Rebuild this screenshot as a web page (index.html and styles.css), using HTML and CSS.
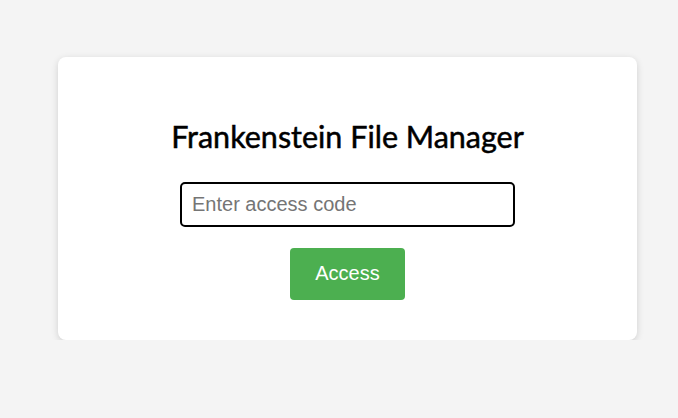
FILE: index.html
```html
<!DOCTYPE html>
<html lang="en">
<head>
<meta charset="utf-8">
<title>Frankenstein File Manager</title>
<link rel="stylesheet" href="styles.css">
</head>
<body>
<div class="card">
  <h1 class="title">Frankenstein File Manager</h1>
  <input class="code" type="text" placeholder="Enter access code" autofocus>
  <button class="access">Access</button>
</div>
</body>
</html>
```
FILE: styles.css
```css
html, body {
  margin: 0;
  padding: 0;
  background: #f4f4f4;
}
body {
  padding: 57px 0 0 58px;
  font-family: "Lato", "Liberation Sans", sans-serif;
}
.card {
  box-sizing: border-box;
  width: 579px;
  height: 283px;
  background: #ffffff;
  border-radius: 8px;
  box-shadow: 0 2px 7px rgba(0, 0, 0, 0.15);
  padding: 40px;
  display: flex;
  flex-direction: column;
  align-items: center;
}
.title {
  margin: 22px 0 0 0;
  font-family: "Lato", sans-serif;
  font-weight: 400;
  font-size: 30.5px;
  line-height: 34px;
  color: #000;
  -webkit-text-stroke: 0.5px #000;
}
.code {
  box-sizing: border-box;
  margin-top: 29px;
  width: 335px;
  height: 45px;
  border: 2px solid #000;
  border-radius: 5px;
  padding: 0 10px;
  font-family: "Liberation Sans", Arial, sans-serif;
  font-size: 20px;
  color: #000;
  outline: none;
  caret-color: #000;
}
.code::placeholder {
  color: #757575;
}
.access {
  margin-top: 21px;
  box-sizing: border-box;
  height: 53px;
  padding: 0 25px;
  background: #4caf50;
  color: #fff;
  border: none;
  border-radius: 4px;
  font-family: "Liberation Sans", Arial, sans-serif;
  font-size: 20px;
}
```
